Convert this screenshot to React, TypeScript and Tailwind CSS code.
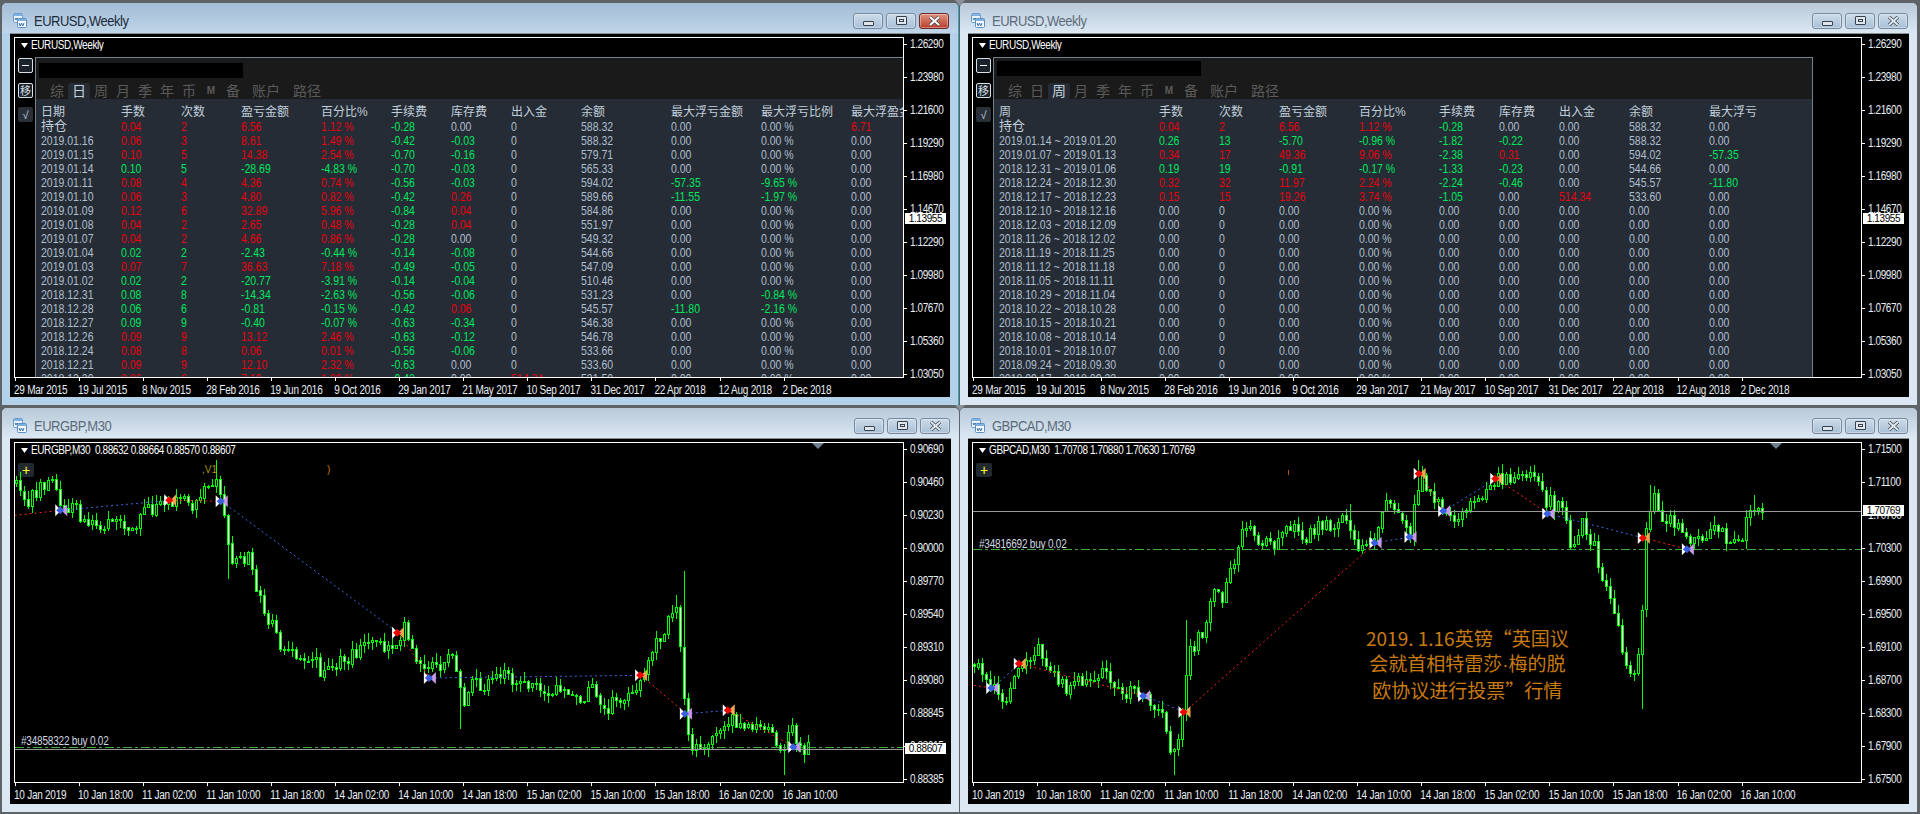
import type { ReactNode } from 'react'

const FONT = "font-['Liberation_Sans','Noto_Sans_CJK_SC',sans-serif]"

type Pt = [number, number]

const TOP_TIMES = ['29 Mar 2015', '19 Jul 2015', '8 Nov 2015', '28 Feb 2016', '19 Jun 2016', '9 Oct 2016', '29 Jan 2017', '21 May 2017', '10 Sep 2017', '31 Dec 2017', '22 Apr 2018', '12 Aug 2018', '2 Dec 2018']
const M30_TIMES = ['10 Jan 2019', '10 Jan 18:00', '11 Jan 02:00', '11 Jan 10:00', '11 Jan 18:00', '14 Jan 02:00', '14 Jan 10:00', '14 Jan 18:00', '15 Jan 02:00', '15 Jan 10:00', '15 Jan 18:00', '16 Jan 02:00', '16 Jan 10:00']
const WEEKLY_PRICES = ['1.26290', '1.23980', '1.21600', '1.19290', '1.16980', '1.14670', '1.12290', '1.09980', '1.07670', '1.05360', '1.03050']
const GBP_PRICES = ['0.90690', '0.90460', '0.90230', '0.90000', '0.89770', '0.89540', '0.89310', '0.89080', '0.88845', '0.88615', '0.88385']
const CAD_PRICES = ['1.71500', '1.71100', '1.70700', '1.70300', '1.69900', '1.69500', '1.69100', '1.68700', '1.68300', '1.67900', '1.67500']

const DAY_HEAD = ['日期', '手数', '次数', '盈亏金额', '百分比%', '手续费', '库存费', '出入金', '余额', '最大浮亏金额', '最大浮亏比例', '最大浮盈金额']
const DAY_COLS = 'grid-cols-[80px_60px_60px_80px_70px_60px_60px_70px_90px_90px_90px_90px]'
const DAY_ROWS = [
  '持仓|0.04|2|6.56|1.12 %|-0.28|0.00|0|588.32|0.00|0.00 %|6.71',
  '2019.01.16|0.06|3|8.61|1.49 %|-0.42|-0.03|0|588.32|0.00|0.00 %|0.00',
  '2019.01.15|0.10|5|14.38|2.54 %|-0.70|-0.16|0|579.71|0.00|0.00 %|0.00',
  '2019.01.14|0.10|5|-28.69|-4.83 %|-0.70|-0.03|0|565.33|0.00|0.00 %|0.00',
  '2019.01.11|0.08|4|4.36|0.74 %|-0.56|-0.03|0|594.02|-57.35|-9.65 %|0.00',
  '2019.01.10|0.06|3|4.80|0.82 %|-0.42|0.26|0|589.66|-11.55|-1.97 %|0.00',
  '2019.01.09|0.12|6|32.89|5.96 %|-0.84|0.04|0|584.86|0.00|0.00 %|0.00',
  '2019.01.08|0.04|2|2.65|0.48 %|-0.28|0.04|0|551.97|0.00|0.00 %|0.00',
  '2019.01.07|0.04|2|4.66|0.86 %|-0.28|0.00|0|549.32|0.00|0.00 %|0.00',
  '2019.01.04|0.02|2|-2.43|-0.44 %|-0.14|-0.08|0|544.66|0.00|0.00 %|0.00',
  '2019.01.03|0.07|7|36.63|7.18 %|-0.49|-0.05|0|547.09|0.00|0.00 %|0.00',
  '2019.01.02|0.02|2|-20.77|-3.91 %|-0.14|-0.04|0|510.46|0.00|0.00 %|0.00',
  '2018.12.31|0.08|8|-14.34|-2.63 %|-0.56|-0.06|0|531.23|0.00|-0.84 %|0.00',
  '2018.12.28|0.06|6|-0.81|-0.15 %|-0.42|0.06|0|545.57|-11.80|-2.16 %|0.00',
  '2018.12.27|0.09|9|-0.40|-0.07 %|-0.63|-0.34|0|546.38|0.00|0.00 %|0.00',
  '2018.12.26|0.09|9|13.12|2.46 %|-0.63|-0.12|0|546.78|0.00|0.00 %|0.00',
  '2018.12.24|0.08|8|0.06|0.01 %|-0.56|-0.06|0|533.66|0.00|0.00 %|0.00',
  '2018.12.21|0.09|9|12.10|2.32 %|-0.63|0.00|0|533.60|0.00|0.00 %|0.00',
  '2018.12.20|0.06|6|7.10|1.39 %|-0.42|0.00|514.34|531.50|0.00|0.00 %|0.00',
]

const WEEK_HEAD = ['周', '手数', '次数', '盈亏金额', '百分比%', '手续费', '库存费', '出入金', '余额', '最大浮亏']
const WEEK_COLS = 'grid-cols-[160px_60px_60px_80px_80px_60px_60px_70px_80px_90px]'
const zeroWeek = (w: string) => `${w}|0.00|0|0.00|0.00 %|0.00|0.00|0.00|0.00|0.00`
const WEEK_ROWS = [
  '持仓|0.04|2|6.56|1.12 %|-0.28|0.00|0.00|588.32|0.00',
  '2019.01.14 ~ 2019.01.20|0.26|13|-5.70|-0.96 %|-1.82|-0.22|0.00|588.32|0.00',
  '2019.01.07 ~ 2019.01.13|0.34|17|49.36|9.06 %|-2.38|0.31|0.00|594.02|-57.35',
  '2018.12.31 ~ 2019.01.06|0.19|19|-0.91|-0.17 %|-1.33|-0.23|0.00|544.66|0.00',
  '2018.12.24 ~ 2018.12.30|0.32|32|11.97|2.24 %|-2.24|-0.46|0.00|545.57|-11.80',
  '2018.12.17 ~ 2018.12.23|0.15|15|19.26|3.74 %|-1.05|0.00|514.34|533.60|0.00',
  ...['2018.12.10 ~ 2018.12.16', '2018.12.03 ~ 2018.12.09', '2018.11.26 ~ 2018.12.02', '2018.11.19 ~ 2018.11.25', '2018.11.12 ~ 2018.11.18', '2018.11.05 ~ 2018.11.11', '2018.10.29 ~ 2018.11.04', '2018.10.22 ~ 2018.10.28', '2018.10.15 ~ 2018.10.21', '2018.10.08 ~ 2018.10.14', '2018.10.01 ~ 2018.10.07', '2018.09.24 ~ 2018.09.30', '2018.09.17 ~ 2018.09.23'].map(zeroWeek),
]

// first two numbers follow the row's profit, date and balance are never coloured
function cellColor(cells: string[], i: number) {
  if (i === 0 || i === 8) return 'text-[#b0bfd0]'
  const v = parseFloat(i === 1 || i === 2 ? cells[3] : cells[i])
  if (v > 0) return 'text-[#e8000f]'
  if (v < 0) return 'text-[#00e65f]'
  return 'text-[#b0bfd0]'
}

// local pixel coords come from a 1.633 x 3 zoom of the reference, hence the conversion
const conv = (pts: Pt[], ox: number): Pt[] => pts.map(([x, y]) => [x / 1.633 - ox, y / 3 - 41])

const GBP_PATH: Pt[] = [[24, 240], [40, 310], [60, 260], [75, 240], [90, 240], [100, 320], [125, 290], [130, 370], [160, 370], [180, 350], [210, 385], [235, 330], [270, 310], [325, 300], [335, 250], [355, 225], [362, 300], [375, 460], [405, 470], [420, 560], [435, 640], [450, 690], [460, 745], [510, 760], [525, 815], [545, 800], [560, 770], [605, 730], [640, 730], [660, 680], [675, 740], [695, 810], [740, 770], [755, 900], [770, 830], [790, 870], [810, 810], [870, 850], [925, 880], [945, 900], [965, 850], [985, 920], [1025, 880], [1045, 830], [1065, 750], [1085, 680], [1105, 600], [1116, 880], [1125, 1040], [1150, 1015], [1190, 950], [1220, 985], [1260, 990], [1280, 1040], [1292, 970], [1300, 1040], [1320, 1040]]
const GBP_SPIKES: Pt[] = [[1116, 508], [352, 175], [752, 980], [1278, 1118], [372, 532], [1104, 578], [658, 645]]
const GBP_TRADES: [Pt, Pt, string][] = [
  [[24, 340], [100, 325], '#ff2020'], [[100, 325], [278, 295], '#3f66e0'], [[278, 295], [362, 298], '#ff2020'],
  [[362, 298], [650, 692], '#3f66e0'], [[650, 692], [702, 828], '#ff2020'], [[702, 828], [1047, 820], '#3f66e0'],
  [[1047, 820], [1120, 935], '#ff2020'], [[1120, 935], [1190, 925], '#3f66e0'], [[1190, 925], [1297, 1035], '#ff2020'],
]
const GBP_MARKS: [number, number, 'b' | 'r'][] = [[100, 325, 'b'], [362, 298, 'b'], [702, 828, 'b'], [1120, 935, 'b'], [1297, 1035, 'b'], [278, 295, 'r'], [650, 692, 'r'], [1047, 820, 'r'], [1190, 925, 'r']]

const CAD_PATH: Pt[] = [[22, 790], [50, 850], [70, 920], [85, 860], [95, 780], [120, 760], [130, 740], [150, 820], [175, 860], [200, 830], [230, 810], [260, 860], [300, 880], [325, 910], [340, 1020], [352, 1070], [360, 950], [370, 770], [385, 710], [400, 680], [410, 580], [430, 580], [445, 490], [460, 380], [510, 430], [535, 365], [560, 410], [590, 365], [630, 360], [650, 440], [680, 400], [697, 290], [720, 370], [735, 400], [750, 210], [765, 280], [790, 320], [810, 340], [850, 280], [875, 230], [900, 240], [935, 200], [955, 290], [985, 330], [995, 440], [1015, 370], [1035, 440], [1050, 530], [1070, 640], [1085, 770], [1100, 830], [1112, 730], [1115, 400], [1130, 285], [1150, 350], [1180, 380], [1195, 430], [1220, 385], [1245, 375], [1255, 430], [1275, 430], [1290, 310], [1315, 340]]
const CAD_SPIKES: Pt[] = [[1112, 920], [348, 1118], [750, 175], [878, 195], [368, 655], [635, 305], [1295, 278], [1127, 250]]
const CAD_TRADES: [Pt, Pt, string][] = [
  [[22, 850], [52, 858], '#ff2020'], [[52, 858], [97, 785], '#3f66e0'], [[97, 785], [300, 882], '#ff2020'], [[300, 882], [366, 930], '#3f66e0'],
  [[366, 930], [678, 422], '#ff2020'], [[678, 422], [735, 405], '#3f66e0'], [[750, 215], [790, 327], '#ff2020'], [[790, 327], [875, 230], '#3f66e0'],
  [[875, 230], [960, 335], '#ff2020'], [[960, 335], [1116, 408], '#3f66e0'], [[1116, 408], [1188, 442], '#ff2020'],
]
const CAD_MARKS: [number, number, 'b' | 'r'][] = [[52, 858, 'b'], [300, 882, 'b'], [678, 422, 'b'], [735, 405, 'b'], [790, 327, 'b'], [960, 335, 'b'], [1188, 442, 'b'], [97, 785, 'r'], [366, 930, 'r'], [750, 215, 'r'], [875, 230, 'r'], [1116, 408, 'r']]

function Candles({ path, spikes, ox }: { path: Pt[]; spikes: Pt[]; ox: number }) {
  const pts = conv(path, ox)
  const spk = conv(spikes, ox)
  let seed = pts.length * 7919
  const rnd = () => {
    seed = (seed * 1664525 + 1013904223) % 4294967296
    return seed / 4294967296
  }
  const priceAt = (x: number) => {
    for (let i = 1; i < pts.length; i++) {
      if (x <= pts[i][0]) {
        const t = (x - pts[i - 1][0]) / (pts[i][0] - pts[i - 1][0] || 1)
        return pts[i - 1][1] + (pts[i][1] - pts[i - 1][1]) * t
      }
    }
    return pts[pts.length - 1][1]
  }
  const bars = []
  const end = pts[pts.length - 1][0]
  let prev = priceAt(0)
  for (let x = 1; x < end; x += 4) {
    const close = priceAt(x) + (rnd() - 0.5) * 15
    let hi = Math.min(prev, close) - rnd() * 9
    let lo = Math.max(prev, close) + rnd() * 9
    for (const [sx, sy] of spk) {
      if (Math.abs(sx - x) <= 2) {
        hi = Math.min(hi, sy)
        lo = Math.max(lo, sy)
      }
    }
    const top = Math.round(Math.min(prev, close))
    const h = Math.max(Math.round(Math.abs(close - prev)), 1)
    bars.push(
      <g key={x}>
        <line x1={x + 0.5} x2={x + 0.5} y1={hi} y2={lo} stroke="#00ff00" />
        <rect x={x - 0.5} y={top + 0.5} width={2} height={h} fill={close > prev ? '#ffffff' : '#000000'} stroke="#00ff00" />
      </g>,
    )
    prev = close
  }
  return <>{bars}</>
}

function Trades({ trades, marks, ox }: { trades: [Pt, Pt, string][]; marks: [number, number, 'b' | 'r'][]; ox: number }) {
  return (
    <>
      {trades.map(([a, b, c], i) => {
        const [[x1, y1], [x2, y2]] = conv([a, b], ox)
        return <line key={i} x1={x1} y1={y1} x2={x2} y2={y2} stroke={c} strokeDasharray="2 3" />
      })}
      {marks.map(([zx, zy, kind], i) => {
        const [[x, y]] = conv([[zx, zy]], ox)
        return (
          <g key={i} transform={`translate(${x} ${y})`}>
            <polygon points="-6,-6 0,0 -6,6" fill="#ffffff" />
            <polygon points="6,-6 0,0 6,6" fill={kind === 'b' ? '#c79be8' : '#e8a850'} />
            <polygon points="-5,0 -1,-4 3,0 -1,4" fill={kind === 'b' ? '#3a5fe0' : '#f00000'} />
          </g>
        )
      })}
    </>
  )
}

function TitleIcon() {
  return (
    <svg width="14" height="15" viewBox="0 0 14 15" className="shrink-0">
      <rect x="0.5" y="0.5" width="9" height="9" rx="1" fill="#eaf2fa" stroke="#6c9bd0" />
      <rect x="1" y="1" width="8" height="2" fill="#7fb0e0" />
      <rect x="4.5" y="5.5" width="9" height="9" rx="1" fill="#f8fbfe" stroke="#5d8fc4" />
      <rect x="5" y="6" width="8" height="2" fill="#7fb0e0" />
      <path d="M6 10l1.2 3 1.3-3 1.3 3 1.2-3" fill="none" stroke="#3a72b0" />
      <path d="M2 5l1 2 1-2 1 1" fill="none" stroke="#3a72b0" />
    </svg>
  )
}

function WinButton({ kind, active }: { kind: 'min' | 'max' | 'close'; active: boolean }) {
  const hot = kind === 'close' && active
  return (
    <div
      className={`flex h-[16px] w-[30px] items-center justify-center rounded-[3px] border shadow-[inset_0_0_0_1px_rgba(255,255,255,0.35)] ${
        hot ? 'border-[#6e2a28] bg-linear-to-b from-[#e0917f] to-[#b83c2c]' : 'border-[#76899e] bg-linear-to-b from-[#ccdbe9] to-[#a9c0d6]'
      }`}
    >
      {kind === 'min' && <div className="mt-[5px] h-[5px] w-[11px] rounded-[1px] border border-[#36414e] bg-[#dfe5ea]" />}
      {kind === 'max' && (
        <div className="flex h-[9px] w-[11px] items-center justify-center rounded-[1px] border border-[#36414e] bg-[#dfe5ea]">
          <div className="h-[3px] w-[5px] border border-[#36414e]" />
        </div>
      )}
      {kind === 'close' && (
        <svg width="13" height="10" viewBox="0 0 13 10">
          <path d="M2 1l9 8M11 1l-9 8" stroke="#3d454e" strokeWidth="3.4" />
          <path d="M2 1l9 8M11 1l-9 8" stroke={hot ? '#ffffff' : '#dfe7ef'} strokeWidth="2" />
        </svg>
      )}
    </div>
  )
}

function Window({ title, active, children }: { title: string; active?: boolean; children: ReactNode }) {
  return (
    <div className={`flex flex-col overflow-hidden rounded-t-[5px] px-[8px] pb-[8px] ${active ? 'border-r border-[#3fa0b8] bg-[#b4d1ea]' : 'bg-[#dbe7f3]'}`}>
      <div className={`-mx-[8px] flex h-[30px] shrink-0 items-center gap-[7px] pl-[11px] pr-[9px] pt-[5px] ${active ? 'bg-linear-to-b from-[#a3bdd6] to-[#bfd5e9]' : 'bg-linear-to-b from-[#b9c9d8] to-[#dbe8f4]'}`}>
        <TitleIcon />
        <span className={`flex-1 scale-y-[1.15] text-[13px] tracking-[-0.5px] ${active ? 'text-[#1d2b3a]' : 'text-[#5c6b7b]'}`}>{title}</span>
        <div className="flex gap-[3px]">
          <WinButton kind="min" active={!!active} />
          <WinButton kind="max" active={!!active} />
          <WinButton kind="close" active={!!active} />
        </div>
      </div>
      <div className="flex-1 border-t border-[#8a8f94] bg-black px-[4px] pt-[3px]">{children}</div>
    </div>
  )
}

function ChartFrame({ times, prices, box, boxY, children }: { times: string[]; prices: string[]; box: string; boxY: number; children: ReactNode }) {
  return (
    <div className="text-[10px] leading-[14px] text-[#e8eef4]">
      <div className="flex">
        <div className="relative h-[341px] w-[890px] shrink-0 overflow-hidden border border-white">{children}</div>
        <div className="relative flex w-[46px] flex-col gap-[19px] tracking-[-0.4px]">
          {prices.map((p) => (
            <div key={p} className="flex h-[14px] items-center gap-[3px]">
              <div className="h-px w-[3px] bg-white" />
              <span className="scale-y-[1.2]">{p}</span>
            </div>
          ))}
          <div className="absolute left-[1px] flex h-[11px] w-[41px] items-center justify-center bg-white text-black" style={{ top: boxY - 5 }}>
            <span className="scale-y-[1.1]">{box}</span>
          </div>
        </div>
      </div>
      <div className="flex tracking-[-0.25px]">
        {times.map((t) => (
          <div key={t} className="w-[64.05px] shrink-0 whitespace-nowrap">
            <div className="ml-[1px] h-[4px] w-px -translate-y-[4px] bg-white" />
            <div className="-mt-[3px] origin-top scale-y-[1.2]">{t}</div>
          </div>
        ))}
      </div>
    </div>
  )
}

function Panel({ head, rows, cols, tab, barTop, weekly }: { head: string[]; rows: string[]; cols: string; tab: number; barTop: number; weekly?: boolean }) {
  const tabs = ['综', '日', '周', '月', '季', '年', '币', 'M', '备', '账户', '路径']
  return (
    <div className="flex min-h-0 flex-1 overflow-hidden">
      <div className="flex w-[20px] shrink-0 flex-col pl-[3px] pt-[1px]">
        <div className="flex h-[15px] w-[15px] items-center justify-center rounded-[2px] border border-[#d8e0e8] bg-[#1c222a]">
          <div className="h-px w-[7px] bg-white" />
        </div>
        <div className="mt-[10px] flex h-[15px] w-[15px] items-center justify-center rounded-[2px] border border-[#d8e0e8] bg-[#1c222a] text-[11px] text-[#d8e0e8]">移</div>
        <div className="mt-[9px] flex h-[15px] w-[15px] items-center justify-center rounded-[2px] bg-[#2a3038] text-[11px] text-[#c8d4e0]">√</div>
      </div>
      <div className={`flex min-w-0 flex-1 flex-col overflow-hidden border-l border-t border-[#75808c] ${weekly ? 'mr-[48px] border-r' : ''}`}>
        <div className="flex h-[41px] shrink-0 flex-col bg-[#1a1a1a]">
          <div className="ml-[3px] h-[15px] w-[204px] shrink-0 bg-black" style={{ marginTop: barTop }} />
          <div className="mt-auto flex h-[16px] pl-[10px] text-[14px] leading-[16px] text-[#5a5a5a]">
            {tabs.map((t, i) => (
              <div key={t} className={`flex items-center justify-center rounded-t-[3px] ${t === '账户' ? 'ml-[6px] w-[32px]' : t === '路径' ? 'ml-[9px] w-[32px]' : t === 'M' ? 'w-[22px] text-[10px] font-bold' : 'w-[22px]'} ${i === tab ? 'bg-[#252c35] text-[#c4d0dc]' : ''}`}>
                {t}
              </div>
            ))}
          </div>
        </div>
        <div className="min-h-0 flex-1 overflow-hidden bg-[#252c35] pl-[5px] pt-[6px] text-[10.5px]">
          <div className={`grid whitespace-nowrap ${cols} text-[#c2cedb]`}>
            {head.map((h) => (
              <div key={h} className="h-[14px] text-[12px]">{h}</div>
            ))}
          </div>
          {rows.map((r) => {
            const cells = r.split('|')
            return (
              <div key={r} className={`grid whitespace-nowrap ${cols}`}>
                {cells.map((c, i) => (
                  <div key={i} className={`h-[14px] ${c === '持仓' ? 'text-[13px] text-[#c2cedb]' : `scale-y-[1.15] ${cellColor(cells, i)}`}`}>{c}</div>
                ))}
              </div>
            )
          })}
        </div>
      </div>
    </div>
  )
}

function ChartHeader({ text }: { text: string }) {
  return (
    <div className="flex h-[19px] shrink-0 items-center pb-[5px] pl-[6px] tracking-[-0.4px] text-white">
      <svg width="7" height="5" viewBox="0 0 7 5" className="mr-[3px] shrink-0"><path d="M0 0h7L3.5 5z" fill="#fff" /></svg>
      <span className="scale-y-[1.2] whitespace-pre">{text}</span>
    </div>
  )
}

function WeeklyChart({ weekly }: { weekly?: boolean }) {
  return (
    <ChartFrame times={TOP_TIMES} prices={WEEKLY_PRICES} box="1.13955" boxY={181}>
      <div className="flex h-full flex-col">
        <ChartHeader text="EURUSD,Weekly" />
        {weekly ? (
          <Panel head={WEEK_HEAD} rows={WEEK_ROWS} cols={WEEK_COLS} tab={2} barTop={3} weekly />
        ) : (
          <Panel head={DAY_HEAD} rows={DAY_ROWS} cols={DAY_COLS} tab={1} barTop={5} />
        )}
      </div>
    </ChartFrame>
  )
}

function PlusButton() {
  return (
    <div className="absolute left-[3px] top-[20px] flex h-[14px] w-[16px] items-center justify-center rounded-[2px] bg-[#222830]">
      <span className="text-[14px] leading-none text-[#ffff30]">+</span>
    </div>
  )
}

function M30Chart({ header, times, prices, box, boxY, path, spikes, trades, marks, ox, orderLabel, orderTop, priceLine, orderLine, extra }: {
  header: string
  times: string[]
  prices: string[]
  box: string
  boxY: number
  path: Pt[]
  spikes: Pt[]
  trades: [Pt, Pt, string][]
  marks: [number, number, 'b' | 'r'][]
  ox: number
  orderLabel: string
  orderTop: number
  priceLine: number
  orderLine: number
  extra?: ReactNode
}) {
  return (
    <ChartFrame times={times} prices={prices} box={box} boxY={boxY}>
      <ChartHeader text={header} />
      <PlusButton />
      <svg width="888" height="339" className="absolute left-0 top-0" shapeRendering="crispEdges">
        <Candles path={path} spikes={spikes} ox={ox} />
        <line x1="0" x2="888" y1={priceLine} y2={priceLine} stroke="#9a9a9a" />
        <line x1="0" x2="888" y1={orderLine} y2={orderLine} stroke="#3fae3f" strokeDasharray="9 3 3 3" />
        <g shapeRendering="auto"><Trades trades={trades} marks={marks} ox={ox} /></g>
        <path d="M797 0h12l-6 6z" fill="#708090" shapeRendering="auto" />
      </svg>
      <div className="absolute left-[6px] scale-y-[1.2] tracking-[-0.2px] text-[#d0d8e0]" style={{ top: orderTop }}>{orderLabel}</div>
      {extra}
    </ChartFrame>
  )
}

export default function App() {
  return (
    <div className={`${FONT} relative grid h-[814px] w-[1920px] grid-cols-[957px_957px] grid-rows-[402px_404px] gap-x-[1px] gap-y-[3px] overflow-hidden bg-[#5e6368] pl-[2px] pt-[3px]`}>
      <Window title="EURUSD,Weekly" active>
        <WeeklyChart />
      </Window>
      <Window title="EURUSD,Weekly">
        <WeeklyChart weekly />
      </Window>
      <Window title="EURGBP,M30">
        <M30Chart
          header="EURGBP,M30  0.88632 0.88664 0.88570 0.88607"
          times={M30_TIMES}
          prices={GBP_PRICES}
          box="0.88607"
          boxY={306}
          path={GBP_PATH}
          spikes={GBP_SPIKES}
          trades={GBP_TRADES}
          marks={GBP_MARKS}
          ox={15}
          orderLabel="#34858322 buy 0.02"
          orderTop={291}
          priceLine={306}
          orderLine={304}
          extra={
            <>
              <div className="absolute left-[187px] top-[20px] text-[#a89000]">,V1</div>
              <div className="absolute left-[312px] top-[20px] text-[#c07800]">)</div>
            </>
          }
        />
      </Window>
      <Window title="GBPCAD,M30">
        <M30Chart
          header="GBPCAD,M30  1.70708 1.70880 1.70630 1.70769"
          times={M30_TIMES}
          prices={CAD_PRICES}
          box="1.70769"
          boxY={68}
          path={CAD_PATH}
          spikes={CAD_SPIKES}
          trades={CAD_TRADES}
          marks={CAD_MARKS}
          ox={12.6}
          orderLabel="#34816692 buy 0.02"
          orderTop={94}
          priceLine={68}
          orderLine={106}
          extra={
            <>
              <div className="absolute left-[315px] top-[27px] h-[5px] w-px bg-[#c05000]" />
              <div className="absolute left-[393px] top-[182px] whitespace-nowrap text-center font-['Noto_Sans_CJK_SC',sans-serif] text-[19px] leading-[25px] text-[#c87a10]">
                2019. 1.16英镑“英国议
                <br />
                会就首相特雷莎<span className="font-['Liberation_Sans']">·</span>梅的脱
                <br />
                欧协议进行投票”行情
              </div>
            </>
          }
        />
      </Window>
      {/* splitter grips where the four windows meet */}
      <svg width="10" height="6" viewBox="0 0 10 6" className="absolute left-[955px] top-0"><path d="M0 0h10L5 6z" fill="#8a9096" /></svg>
      <svg width="10" height="6" viewBox="0 0 10 6" className="absolute left-[955px] top-[405px]"><path d="M0 0h10L5 6z" fill="#8a9096" /></svg>
    </div>
  )
}
